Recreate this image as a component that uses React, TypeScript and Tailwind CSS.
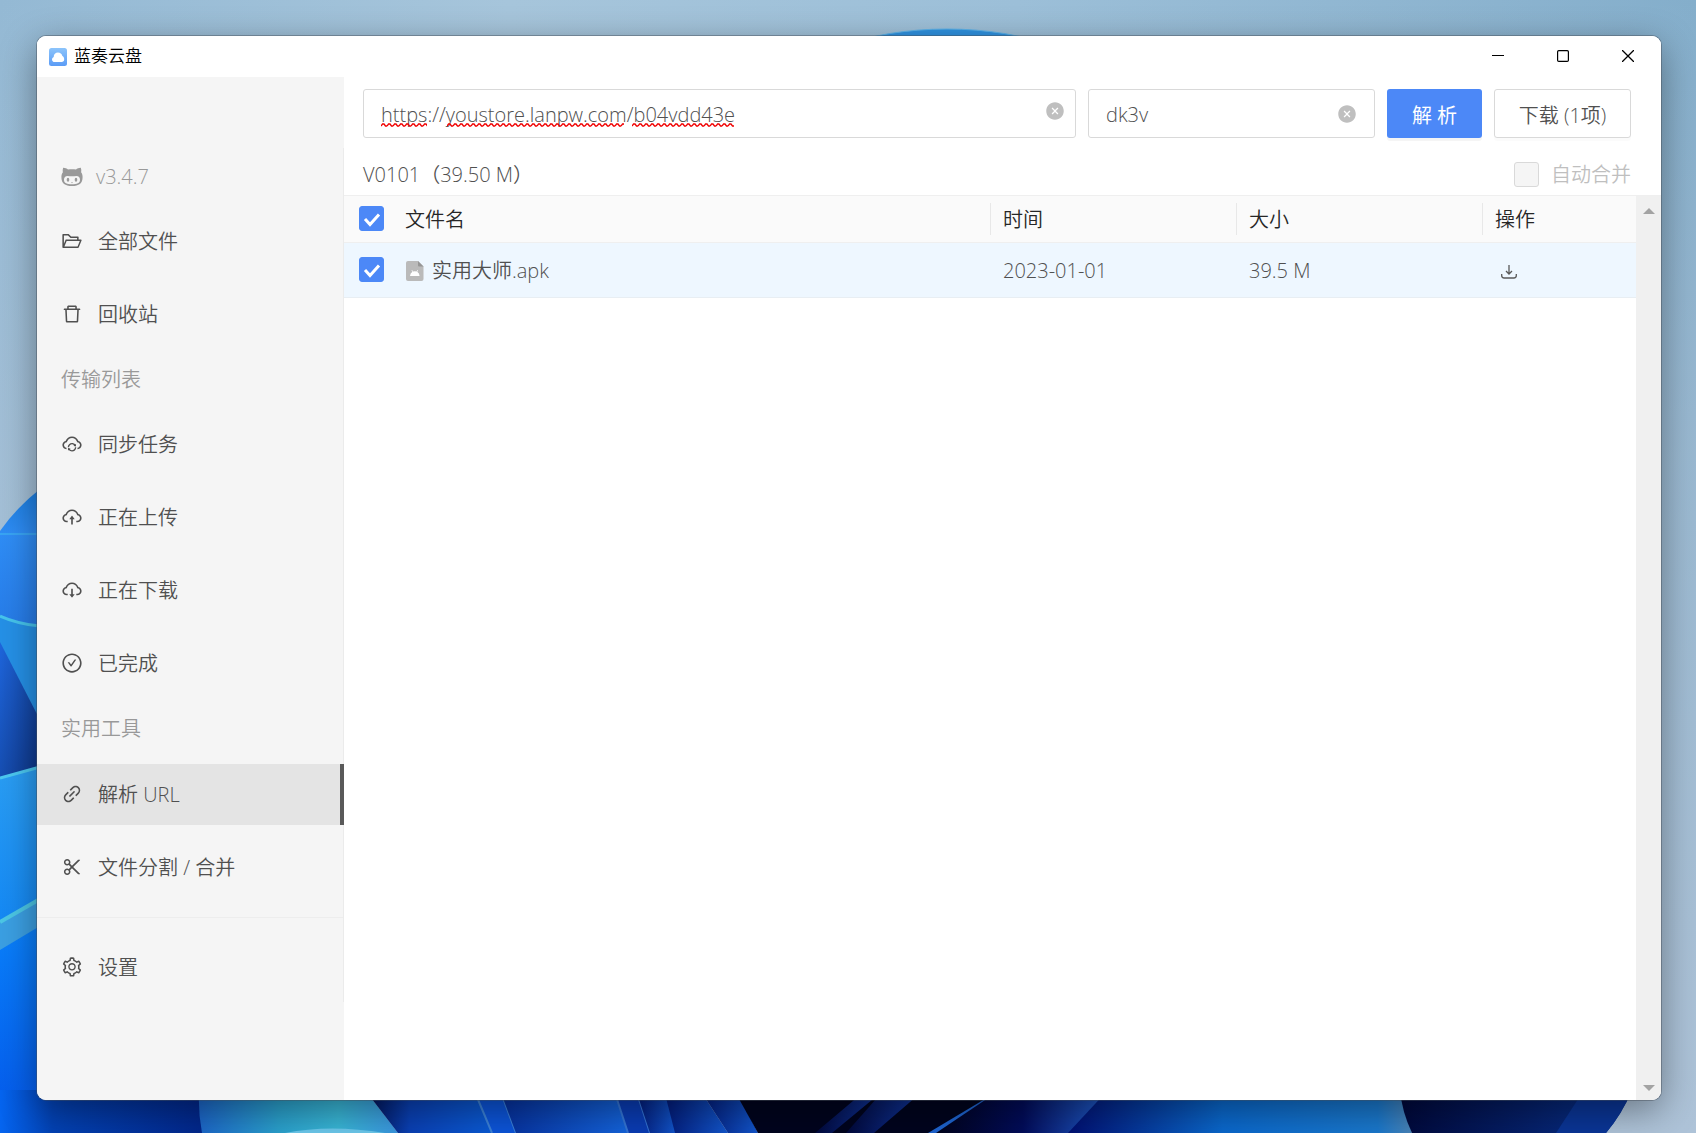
import { useState, type ReactNode } from 'react'
import {
    AiFillCloseCircle,
    AiOutlineCheckCircle,
    AiOutlineCloudDownload,
    AiOutlineCloudSync,
    AiOutlineCloudUpload,
    AiOutlineDelete,
    AiOutlineFolderOpen,
    AiOutlineLink,
    AiOutlineScissor,
    AiOutlineSetting,
} from 'react-icons/ai'

type MenuItem = { key: string; label: string; icon: ReactNode }

const fileMenu: MenuItem[] = [
    { key: 'files', label: '全部文件', icon: <AiOutlineFolderOpen /> },
    { key: 'recycle', label: '回收站', icon: <AiOutlineDelete /> },
]

const transferMenu: MenuItem[] = [
    { key: 'sync', label: '同步任务', icon: <AiOutlineCloudSync /> },
    { key: 'upload', label: '正在上传', icon: <AiOutlineCloudUpload /> },
    { key: 'download', label: '正在下载', icon: <AiOutlineCloudDownload /> },
    { key: 'complete', label: '已完成', icon: <AiOutlineCheckCircle /> },
]

const toolMenu: MenuItem[] = [
    { key: 'parse', label: '解析 URL', icon: <AiOutlineLink /> },
    { key: 'split', label: '文件分割 / 合并', icon: <AiOutlineScissor /> },
]

const files = [{ name: '实用大师.apk', time: '2023-01-01', size: '39.5 M' }]

function Wallpaper() {
    return (
        <svg
            className="absolute inset-0 h-full w-full"
            viewBox="0 0 1696 1133"
            preserveAspectRatio="none"
            aria-hidden="true"
        >
            <defs>
                <linearGradient id="sky" x1="0" y1="0" x2="1" y2="0">
                    <stop offset="0" stopColor="#94b9d4" />
                    <stop offset="0.3" stopColor="#a6c5db" />
                    <stop offset="0.6" stopColor="#9cbfd8" />
                    <stop offset="1" stopColor="#84aecb" />
                </linearGradient>
                <linearGradient id="haze" x1="0" y1="0" x2="0" y2="1">
                    <stop offset="0" stopColor="#b0c4d8" stopOpacity="0" />
                    <stop offset="0.4" stopColor="#b0c4d8" stopOpacity="0.5" />
                    <stop offset="1" stopColor="#aec3d8" />
                </linearGradient>
                <linearGradient id="petalA" x1="0" y1="0" x2="0" y2="1">
                    <stop offset="0" stopColor="#1c7ee0" />
                    <stop offset="0.3" stopColor="#2f8df5" />
                    <stop offset="1" stopColor="#2579e6" />
                </linearGradient>
                <linearGradient id="petalB" x1="0" y1="0" x2="1" y2="1">
                    <stop offset="0" stopColor="#1f66dc" />
                    <stop offset="1" stopColor="#0d3484" />
                </linearGradient>
                <linearGradient id="petalC" x1="0" y1="0" x2="0" y2="1">
                    <stop offset="0" stopColor="#2a9df2" />
                    <stop offset="1" stopColor="#1488f4" />
                </linearGradient>
                <linearGradient id="petalD" x1="0" y1="0" x2="0" y2="1">
                    <stop offset="0" stopColor="#0a80fa" />
                    <stop offset="1" stopColor="#0457ea" />
                </linearGradient>
                <linearGradient id="deep" x1="0" y1="0" x2="1" y2="0">
                    <stop offset="0" stopColor="#0565f0" />
                    <stop offset="0.25" stopColor="#0342b4" />
                    <stop offset="1" stopColor="#02268a" />
                </linearGradient>
                <linearGradient id="teal" x1="0" y1="0" x2="1" y2="0">
                    <stop offset="0" stopColor="#1c66c8" />
                    <stop offset="0.4" stopColor="#2aa0cc" />
                    <stop offset="0.7" stopColor="#38b6d6" />
                    <stop offset="1" stopColor="#3a96e0" />
                </linearGradient>
                <linearGradient id="fold" x1="0" y1="0" x2="1" y2="0">
                    <stop offset="0" stopColor="#01104e" />
                    <stop offset="0.35" stopColor="#0a40b4" />
                    <stop offset="1" stopColor="#0a5ad4" />
                </linearGradient>
                <linearGradient id="fold2" x1="0" y1="0" x2="1" y2="0">
                    <stop offset="0" stopColor="#06309c" />
                    <stop offset="1" stopColor="#1464dc" />
                </linearGradient>
                <linearGradient id="fold3" x1="0" y1="0" x2="1" y2="0">
                    <stop offset="0" stopColor="#021a78" />
                    <stop offset="1" stopColor="#1256cc" />
                </linearGradient>
                <linearGradient id="streak" x1="0" y1="0" x2="1" y2="0">
                    <stop offset="0" stopColor="#01083a" />
                    <stop offset="1" stopColor="#1038a4" />
                </linearGradient>
                <linearGradient id="night" x1="0" y1="0" x2="1" y2="0">
                    <stop offset="0" stopColor="#01031c" />
                    <stop offset="0.5" stopColor="#020c5a" />
                    <stop offset="1" stopColor="#2160d0" />
                </linearGradient>
                <linearGradient id="wide" x1="0" y1="0" x2="1" y2="0">
                    <stop offset="0" stopColor="#011072" />
                    <stop offset="0.45" stopColor="#0a68cc" />
                    <stop offset="0.9" stopColor="#1a78cc" />
                    <stop offset="1" stopColor="#4a84b8" />
                </linearGradient>
                <linearGradient id="navy" x1="0" y1="0" x2="1" y2="0">
                    <stop offset="0" stopColor="#01093c" />
                    <stop offset="1" stopColor="#08328e" />
                </linearGradient>
            </defs>
            <rect width="1696" height="1133" fill="url(#sky)" />
            <rect width="1696" height="1133" fill="url(#haze)" />
            <ellipse cx="947" cy="89" rx="150" ry="60" fill="#2f92e0" stroke="#5cb4ec" strokeWidth="1" />

            <path d="M0 531Q16 508 40 489V640H0Z" fill="url(#petalA)" />
            <path d="M0 534H40" stroke="#38a4f4" strokeWidth="2" />
            <path d="M0 616Q18 624 40 626V725L0 650Z" fill="#2590e6" />
            <path d="M0 616Q18 624 40 626" fill="none" stroke="#46c4ec" strokeWidth="3" />
            <path d="M0 642L40 720V785H0Z" fill="url(#petalB)" />
            <path d="M0 778L40 767V925H0Z" fill="url(#petalC)" />
            <path d="M0 778L40 767" stroke="#4cc8f0" strokeWidth="3" />
            <path d="M0 948L40 924V1133H0Z" fill="url(#petalD)" />
            <path d="M0 922L40 899V926L0 950Z" fill="#3b9fe2" />
            <path d="M0 922L40 899" stroke="#4cc6e4" strokeWidth="4" />

            <path d="M0 1090H210V1133H0Z" fill="url(#deep)" />
            <path d="M199 1090H365L398 1133H202Q198 1112 199 1090Z" fill="url(#teal)" />
            <path d="M285 1133Q330 1124 385 1133Z" fill="#6cc8ec" />
            <path d="M365 1090H480L492 1133H398Z" fill="url(#fold)" />
            <path d="M474 1090H500L516 1133H492Z" fill="#0c54d8" />
            <path d="M474 1090L492 1133M500 1090L516 1133" stroke="#3c82d8" strokeWidth="2" />
            <path d="M500 1090H620L630 1133H516Z" fill="url(#fold2)" />
            <path d="M614 1090H636L650 1133H628Z" fill="#0a3cb4" />
            <path d="M614 1090L628 1133M636 1090L650 1133" stroke="#3474d4" strokeWidth="2" />
            <path d="M636 1090H668L676 1133H650Z" fill="url(#fold3)" />
            <path d="M664 1090H700L728 1133H675Z" fill="url(#fold3)" />
            <path d="M700 1090H736L758 1133H728Z" fill="url(#fold3)" />
            <path d="M734 1090H1000L960 1133H758Z" fill="#01041e" />
            <path d="M866 1090H884L832 1133H815Z" fill="url(#streak)" />
            <path d="M884 1090H924L874 1133H846Z" fill="url(#streak)" />
            <path d="M1000 1090L928 1133H970L1010 1090Z" fill="#1e64d0" />
            <path d="M1000 1090H1110L1070 1133H936Z" fill="url(#night)" />
            <path d="M1108 1090H1400L1412 1133H1068Z" fill="url(#wide)" />
            <path d="M1400 1090H1632Q1622 1114 1606 1133H1412Q1402 1112 1400 1090Z" fill="url(#navy)" />
            <path d="M1584 1090H1632Q1622 1114 1606 1133H1556Z" fill="#0a3596" />
        </svg>
    )
}

function CatIcon() {
    return (
        <svg width="22" height="20" viewBox="0 0 22 20" fill="#999999" aria-hidden="true">
            <path
                fillRule="evenodd"
                d="M2.200 0.800C4 0.700 5.800 1.700 7 2.500C9.600 2 12.400 2 15 2.500C16.200 1.700 18 0.700 19.800 0.800C20.400 2.300 20.400 3.900 20.100 5.200C21.200 6.500 21.600 8 21.600 10C21.600 16.500 18 19 11 19C4 19 0.400 16.500 0.400 10C0.400 8 0.800 6.500 1.900 5.200C1.600 3.900 1.600 2.300 2.200 0.800ZM6.500 9C4.300 9 3 10.600 3 12.800C3 16.300 6 17.300 11 17.300C16 17.300 19 16.300 19 12.800C19 10.600 17.700 9 15.500 9C13.800 9 12.600 9.300 11 9.300C9.400 9.300 8.200 9 6.500 9Z"
            />
            <ellipse cx="7" cy="12.800" rx="1.300" ry="2" />
            <ellipse cx="15" cy="12.800" rx="1.300" ry="2" />
            <path d="M10 15.300H12L11 16.300Z" />
        </svg>
    )
}

function MenuList({ items, active, onSelect }: { items: MenuItem[]; active: string; onSelect: (key: string) => void }) {
    return (
        <ul className="flex flex-col gap-3">
            {items.map((item) => (
                <li key={item.key} className="-mr-px">
                    <button
                        type="button"
                        onClick={() => onSelect(item.key)}
                        className={
                            item.key === active
                                ? 'flex h-[61px] w-full items-center gap-[15px] border-r-4 border-[#595959] bg-[#e4e4e4] pl-6'
                                : 'flex h-[61px] w-full items-center gap-[15px] pl-6'
                        }
                    >
                        <span className="pb-0.5 text-[22px]">{item.icon}</span>
                        {item.label}
                    </button>
                </li>
            ))}
        </ul>
    )
}

function Sidebar() {
    const [active, setActive] = useState('parse')

    return (
        <aside className="flex w-[307px] shrink-0 flex-col bg-[#f5f5f5] pt-[71px]">
            <nav className="flex flex-col gap-3 border-r border-[#ebebeb] pt-1.5 pb-1">
                <div className="flex h-[45px] items-center gap-[13px] pl-6 text-[#999999]">
                    <CatIcon />
                    v3.4.7
                </div>
                <MenuList items={fileMenu} active={active} onSelect={setActive} />
                <h2 className="flex h-[45px] items-center pl-6 text-[#999999]">传输列表</h2>
                <MenuList items={transferMenu} active={active} onSelect={setActive} />
                <h2 className="flex h-[46px] items-center pl-6 text-[#999999]">实用工具</h2>
                <MenuList items={toolMenu} active={active} onSelect={setActive} />
                <hr className="my-[7px] border-[#ededed]" />
                <MenuList
                    items={[{ key: 'setting', label: '设置', icon: <AiOutlineSetting /> }]}
                    active={active}
                    onSelect={setActive}
                />
            </nav>
        </aside>
    )
}

function TitleBar() {
    return (
        <header className="flex h-[41px] shrink-0 items-center bg-white pl-3 text-[17px] text-black">
            <svg width="18" height="18" viewBox="0 0 18 18" aria-hidden="true">
                <defs>
                    <linearGradient id="logo" x1="0" y1="0" x2="0" y2="1">
                        <stop offset="0" stopColor="#8cc4fb" />
                        <stop offset="1" stopColor="#5b9cf6" />
                    </linearGradient>
                </defs>
                <rect width="18" height="18" rx="2.500" fill="url(#logo)" />
                <path
                    d="M5.600 14C4 14 3 12.800 3 11.400C3 10.200 3.700 9.300 4.700 8.900C4.700 6.400 6.500 4.600 9 4.600C11.200 4.600 12.900 5.900 13.400 7.900C14.500 8.500 15.200 9.800 15.200 11.200C15.200 12.900 14.200 14 12.600 14Z"
                    fill="#fff"
                />
            </svg>
            <h1 className="pb-0.5 pl-[7px]">蓝奏云盘</h1>
            <div className="ml-auto flex h-full pb-0.5">
                <button type="button" aria-label="最小化" className="grid w-[65px] place-items-center">
                    <svg width="12" height="12" viewBox="0 0 12 12">
                        <path d="M0 5.500H12" stroke="#000" />
                    </svg>
                </button>
                <button type="button" aria-label="最大化" className="grid w-[65px] place-items-center">
                    <svg width="12" height="12" viewBox="0 0 12 12">
                        <rect x="0.600" y="0.600" width="10.800" height="10.800" rx="1.200" fill="none" stroke="#000" strokeWidth="1.200" />
                    </svg>
                </button>
                <button type="button" aria-label="关闭" className="grid w-[66px] place-items-center">
                    <svg width="12" height="12" viewBox="0 0 12 12">
                        <path d="M0 0L12 12M12 0L0 12" stroke="#000" strokeWidth="1.300" />
                    </svg>
                </button>
            </div>
        </header>
    )
}

function Checkbox({ label }: { label: string }) {
    const [checked, setChecked] = useState(true)

    return (
        <span className="grid size-[25px]">
            <input
                type="checkbox"
                aria-label={label}
                checked={checked}
                onChange={(e) => setChecked(e.target.checked)}
                className="col-start-1 row-start-1 size-[25px] appearance-none rounded-[3px] border border-[#d9d9d9] bg-white checked:border-[#4c88f7] checked:bg-[#4c88f7]"
            />
            {checked && (
                <svg viewBox="0 0 25 25" className="pointer-events-none col-start-1 row-start-1 size-[25px]">
                    <path d="M6 13L11 18.500L20 8.500" fill="none" stroke="#fff" strokeWidth="3" />
                </svg>
            )}
        </span>
    )
}

function ApkIcon() {
    return (
        <svg width="18" height="20" viewBox="0 0 18 20" aria-hidden="true">
            <path d="M2 0H12L17.500 5.500V18Q17.500 20 15.500 20H2Q0 20 0 18V2Q0 0 2 0Z" fill="#bababa" />
            <path d="M12 0L17.500 5.500H13Q12 5.500 12 4.500Z" fill="#969696" />
            <path d="M4 15Q4.200 12 6.400 10.800L5.500 9.200L6.100 8.900L7 10.500Q8.800 9.900 10.600 10.500L11.500 8.900L12.100 9.200L11.200 10.800Q13.400 12 13.600 15Z" fill="#fff" />
        </svg>
    )
}

// Red wavy line under words the spell checker does not know
function Squiggle({ className }: { className: string }) {
    return (
        <svg height="4" className={className}>
            <defs>
                <pattern id="wave" width="6" height="4" patternUnits="userSpaceOnUse">
                    <path d="M0 3L1.500 1L3 1L4.500 3L6 3" fill="none" stroke="#f00000" strokeWidth="1.300" />
                </pattern>
            </defs>
            <rect width="100%" height="4" fill="url(#wave)" />
        </svg>
    )
}

function ParseForm() {
    const [url, setUrl] = useState('https://youstore.lanpw.com/b04vdd43e')
    const [pwd, setPwd] = useState('dk3v')

    return (
        <form className="flex h-[49px] gap-3" onSubmit={(e) => e.preventDefault()}>
            <div className="relative flex flex-1 items-center rounded-[3px] border border-[#d9d9d9] pr-2.5 pl-[17px]">
                <input
                    type="text"
                    aria-label="分享链接"
                    spellCheck={false}
                    value={url}
                    onChange={(e) => setUrl(e.target.value)}
                    className="h-full min-w-0 flex-1 bg-transparent pt-0.5 outline-none"
                />
                <div className="pointer-events-none absolute top-[33px] left-[17px] flex">
                    <Squiggle className="w-[46px]" />
                    <Squiggle className="ml-5 w-[177px]" />
                    <Squiggle className="ml-2 w-[102px]" />
                </div>
                <button type="button" aria-label="清空链接" className="mb-1.5" onClick={() => setUrl('')}>
                    <AiFillCloseCircle className="text-[20px] text-[#bfbfbf]" />
                </button>
            </div>
            <div className="flex w-[287px] items-center rounded-[3px] border border-[#d9d9d9] pr-[17px] pl-[17px]">
                <input
                    type="text"
                    aria-label="提取码"
                    value={pwd}
                    onChange={(e) => setPwd(e.target.value)}
                    className="h-full min-w-0 flex-1 bg-transparent pt-0.5 outline-none"
                />
                <button type="button" aria-label="清空提取码" onClick={() => setPwd('')}>
                    <AiFillCloseCircle className="text-[20px] text-[#bfbfbf]" />
                </button>
            </div>
            <button
                type="submit"
                className="w-[95px] rounded-[3px] bg-[#4c88f7] pt-1 font-normal text-white shadow-[0_3px_0_rgba(0,0,0,0.04)]"
            >
                解 析
            </button>
            <button
                type="button"
                className="w-[137px] rounded-[3px] border border-[#d9d9d9] bg-white pt-1 shadow-[0_3px_0_rgba(0,0,0,0.015)]"
            >
                下载 (1项)
            </button>
        </form>
    )
}

function FileTable() {
    return (
        <table className="w-full table-fixed text-left">
            <colgroup>
                <col className="w-[61px]" />
                <col />
                <col className="w-[246px]" />
                <col className="w-[246px]" />
                <col className="w-[154px]" />
            </colgroup>
            <thead className="bg-[#fafafa] text-[#262626]">
                <tr className="h-[46px] border-b border-[#efefef]">
                    <th className="pl-[15px]">
                        <Checkbox label="全选" />
                    </th>
                    <th className="pt-0.5 font-[350]">文件名</th>
                    {['时间', '大小', '操作'].map((title) => (
                        <th key={title} className="font-[350]">
                            <div className="flex h-8 items-center border-l border-[#e8e8e8] pt-0.5 pl-3">{title}</div>
                        </th>
                    ))}
                </tr>
            </thead>
            <tbody>
                {files.map((file) => (
                    <tr key={file.name} className="h-[55px] border-b border-[#e8eef3] bg-[#eef7ff]">
                        <td className="pl-[15px]">
                            <Checkbox label={file.name} />
                        </td>
                        <td className="pt-0.5">
                            <div className="flex items-center gap-2 pl-px">
                                <ApkIcon />
                                {file.name}
                            </div>
                        </td>
                        <td className="pt-0.5 pl-[13px]">{file.time}</td>
                        <td className="pt-0.5 pl-[13px]">{file.size}</td>
                        <td className="pl-[19px]">
                            <button type="button" aria-label="下载" className="block pt-1">
                                <svg width="16" height="16" viewBox="0 0 16 16" fill="none" stroke="#595959" strokeWidth="1.300">
                                    <path d="M8 1V9.500M5 7L8 10L11 7" />
                                    <path d="M0.700 10V11.500Q0.700 14 3.200 14H12.800Q15.300 14 15.300 11.500V10" />
                                </svg>
                            </button>
                        </td>
                    </tr>
                ))}
            </tbody>
        </table>
    )
}

export default function App() {
    return (
        <div className="relative flex h-screen overflow-hidden bg-[#9dbdd6] pt-9 pr-[35px] pb-[33px] pl-[37px] font-['Open_Sans','Noto_Sans_CJK_SC',sans-serif] text-[20px] leading-7 font-[350] text-[#505050]">
            <Wallpaper />
            <div className="relative flex min-w-0 flex-1 flex-col rounded-[9px] shadow-[0_0_0_1px_rgba(70,80,90,0.45),0_10px_36px_rgba(0,0,0,0.4)]">
                <div className="flex min-h-0 flex-1 flex-col overflow-hidden rounded-[9px] bg-white">
                    <TitleBar />
                    <div className="flex min-h-0 flex-1">
                        <Sidebar />
                        <main className="flex min-w-0 flex-1 flex-col">
                            <div className="pt-3 pr-[30px] pl-[19px]">
                                <ParseForm />
                                <div className="flex h-[57px] items-center justify-between pt-4">
                                    <span>V0101（39.50 M）</span>
                                    <label className="flex items-center gap-3 text-[#bfbfbf]">
                                        <input
                                            type="checkbox"
                                            disabled
                                            className="size-[25px] appearance-none rounded-[3px] border border-[#d9d9d9] bg-[#f5f5f5]"
                                        />
                                        自动合并
                                    </label>
                                </div>
                            </div>
                            <div className="flex min-h-0 flex-1 border-t border-[#efefef]">
                                <div className="min-w-0 flex-1">
                                    <FileTable />
                                </div>
                                <div className="flex w-[25px] flex-col items-center justify-between bg-[#f0f0f0] pt-3 pb-[9px]">
                                    <svg width="12" height="6" viewBox="0 0 12 6">
                                        <path d="M0 6L6 0L12 6Z" fill="#a3a3a3" />
                                    </svg>
                                    <svg width="12" height="6" viewBox="0 0 12 6">
                                        <path d="M0 0L6 6L12 0Z" fill="#a3a3a3" />
                                    </svg>
                                </div>
                            </div>
                        </main>
                    </div>
                </div>
            </div>
        </div>
    )
}
